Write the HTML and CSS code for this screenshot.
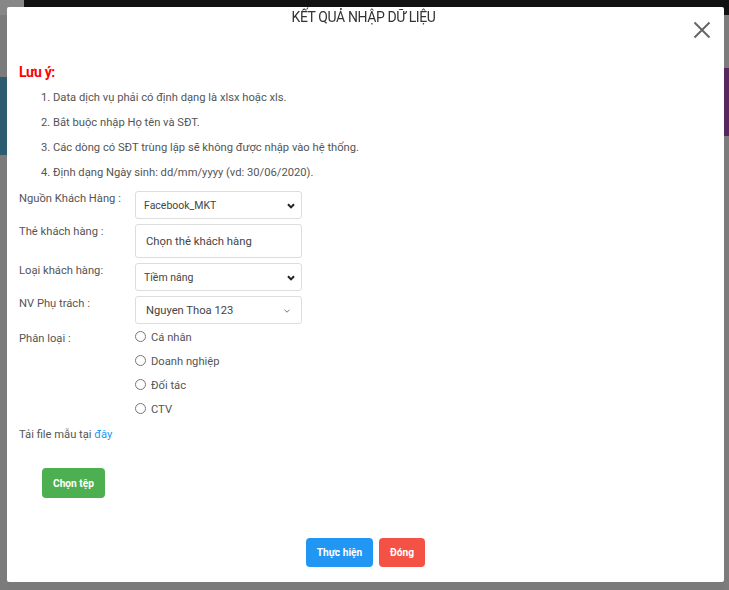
FILE: index.html
```html
<!DOCTYPE html>
<html lang="vi">
<head>
<meta charset="utf-8">
<title>Kết quả nhập dữ liệu</title>
<link rel="stylesheet" href="styles.css">
</head>
<body>
<div class="page">
  <div class="topbar"><div class="topbar-logo"></div></div>
  <div class="under">
    <div class="under-left"><div class="teal"></div></div>
    <div class="under-mid"></div>
    <div class="under-right"><div class="purple"></div></div>
  </div>
</div>

<div class="modal">
  <div class="modal-header">
    <div class="modal-title">KẾT QUẢ NHẬP DỮ LIỆU</div>
    <button class="close" aria-label="Đóng">
      <svg viewBox="0 0 18 18" width="18" height="18"><path d="M1.5 1.5 L16.5 16.5 M16.5 1.5 L1.5 16.5" stroke="#666" stroke-width="2" fill="none"/></svg>
    </button>
  </div>

  <div class="note">Lưu ý:</div>
  <ol class="rules">
    <li>Data dịch vụ phải có định dạng là xlsx hoặc xls.</li>
    <li>Bắt buộc nhập Họ tên và SĐT.</li>
    <li>Các dòng có SĐT trùng lặp sẽ không được nhập vào hệ thống.</li>
    <li>Định dạng Ngày sinh: dd/mm/yyyy (vd: 30/06/2020).</li>
  </ol>

  <div class="form">
    <div class="label">Nguồn Khách Hàng :</div>
    <div class="control select small">
      <span>Facebook_MKT</span>
      <svg class="chev" viewBox="0 0 8 6" width="8" height="6"><path d="M1 1.2 L4 4.4 L7 1.2" stroke="#222" stroke-width="2" fill="none"/></svg>
    </div>

    <div class="label">Thẻ khách hàng :</div>
    <div class="control tall"><span>Chọn thẻ khách hàng</span></div>

    <div class="label">Loại khách hàng:</div>
    <div class="control select small">
      <span>Tiềm năng</span>
      <svg class="chev" viewBox="0 0 8 6" width="8" height="6"><path d="M1 1.2 L4 4.4 L7 1.2" stroke="#222" stroke-width="2" fill="none"/></svg>
    </div>

    <div class="label">NV Phụ trách :</div>
    <div class="control select big">
      <span>Nguyen Thoa 123</span>
      <svg class="chev" viewBox="0 0 6 4" width="6" height="4"><path d="M0.5 0.8 L3 3.2 L5.5 0.8" stroke="#777" stroke-width="1" fill="none"/></svg>
    </div>

    <div class="label label-radio">Phân loại :</div>
    <div class="radios">
      <label class="radio"><span class="dot"></span>Cá nhân</label>
      <label class="radio"><span class="dot"></span>Doanh nghiệp</label>
      <label class="radio"><span class="dot"></span>Đối tác</label>
      <label class="radio"><span class="dot"></span>CTV</label>
    </div>
  </div>

  <div class="template">Tải file mẫu tại <a href="#">đây</a></div>

  <button class="btn btn-green">Chọn tệp</button>

  <div class="footer">
    <button class="btn btn-blue">Thực hiện</button>
    <button class="btn btn-red">Đóng</button>
  </div>
</div>
</body>
</html>
```
FILE: styles.css
```css
html, body {
  margin: 0;
  padding: 0;
  height: 100%;
}
body {
  font-family: Roboto, "Noto Sans", Arial, sans-serif;
  background: #7a7a7a;
  overflow: hidden;
}

/* dimmed page behind the modal */
.page {
  height: 100vh;
  display: flex;
  flex-direction: column;
}
.topbar {
  height: 15px;
  background: #111;
  display: flex;
}
.topbar-logo {
  width: 24px;
  background: #878787;
}
.under {
  flex: 1;
  display: flex;
}
.under-left {
  width: 7px;
  padding-top: 62px;
  background: #7b7b7b;
}
.teal {
  height: 78px;
  background: #2d5b70;
}
.under-mid {
  flex: 1;
}
.under-right {
  width: 5px;
  padding-top: 53px;
  background: #7c7c7c;
}
.purple {
  height: 68px;
  background: #56285f;
}

/* modal */
.modal {
  position: fixed;
  left: 7px;
  top: 7px;
  width: 717px;
  height: 575px;
  box-sizing: border-box;
  background: #fff;
  border-radius: 2px;
  padding: 0 12px 15px;
  display: flex;
  flex-direction: column;
  align-items: flex-start;
  color: #555;
}
.modal-header {
  position: relative;
  align-self: stretch;
}
.modal-title {
  text-align: center;
  font-size: 14px;
  line-height: 20px;
  color: #333;
  letter-spacing: -0.4px;
  padding-right: 4px;
}
.close {
  position: absolute;
  top: 14px;
  right: 1px;
  width: 18px;
  height: 18px;
  padding: 0;
  border: 0;
  background: none;
  display: block;
}
.close svg { display: block; }

.note {
  margin-top: 35px;
  font-size: 14px;
  line-height: 20px;
  font-weight: 700;
  color: #f00;
  letter-spacing: -0.4px;
}
.rules {
  margin: 3px 0 0;
  padding-left: 34px;
  font-size: 11.2px;
  line-height: 25px;
  color: #555;
}

.form {
  margin-top: 6px;
  display: grid;
  grid-template-columns: 116px 167px;
  row-gap: 5px;
  font-size: 11.2px;
}
.label {
  line-height: 14px;
  margin-top: 1px;
  color: #555;
}
.label.label-radio { margin-top: 3px; }
.control {
  box-sizing: border-box;
  border: 1px solid #ddd;
  border-radius: 3px;
  display: flex;
  align-items: center;
  color: #444;
}
.control.select {
  height: 28px;
  justify-content: space-between;
  padding: 1px 6px 0 8px;
}
.control.small { font-size: 10.5px; }
.control.big { font-size: 11.2px; padding-left: 10px; padding-right: 11px; }
.control.tall {
  height: 34px;
  padding: 1px 10px 0 10px;
  font-size: 11.3px;
}
.chev { display: block; }

.radios {
  margin-top: 2px;
  display: flex;
  flex-direction: column;
  gap: 10px;
}
.radio {
  display: flex;
  align-items: center;
  line-height: 14px;
  color: #555;
}
.dot {
  width: 11px;
  height: 11px;
  box-sizing: border-box;
  border: 1px solid #777;
  border-radius: 50%;
  margin: -3px 5px 0 0;
}

.template {
  margin-top: 11px;
  font-size: 11.2px;
  line-height: 14px;
  color: #555;
}
.template a {
  color: #2196f3;
  text-decoration: none;
}

.btn {
  border: 0;
  border-radius: 4px;
  color: #fff;
  font-family: Roboto, "Noto Sans", Arial, sans-serif;
  font-weight: 700;
  font-size: 10.2px;
  padding: 0;
}
.btn-green {
  margin: 26px 0 0 23px;
  width: 63px;
  height: 30px;
  background: #4caf50;
}
.footer {
  margin-top: auto;
  align-self: stretch;
  display: flex;
  justify-content: center;
  gap: 6px;
}
.btn-blue {
  width: 67px;
  height: 29px;
  background: #2196f3;
}
.btn-red {
  width: 46px;
  height: 29px;
  background: #f55246;
}
```
